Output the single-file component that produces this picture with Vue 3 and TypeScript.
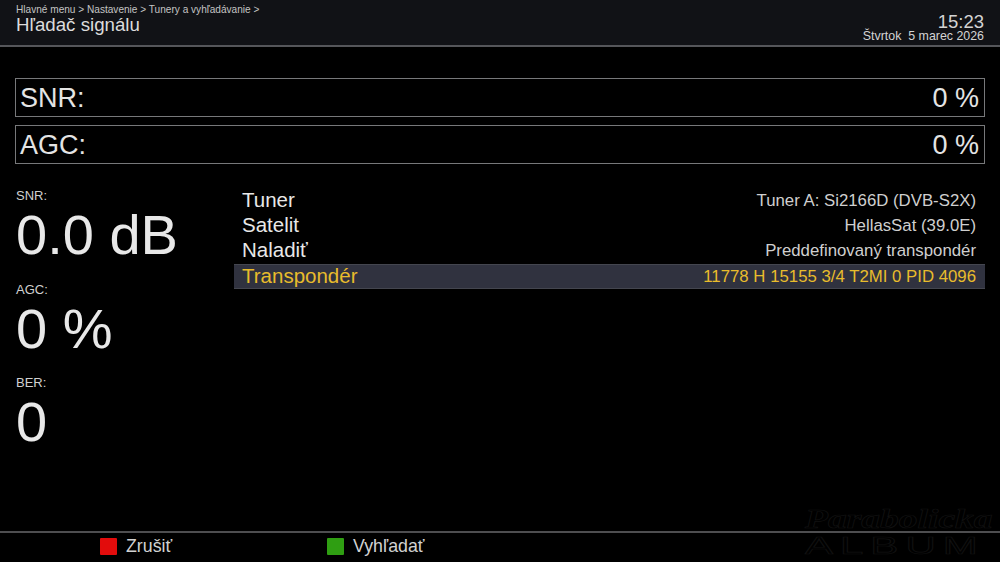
<script setup lang="ts">
interface Row { label: string; value: string; active?: boolean }

const bars = [
  { label: 'SNR:', value: '0 %' },
  { label: 'AGC:', value: '0 %' },
]
const stats = [
  { label: 'SNR:', value: '0.0 dB' },
  { label: 'AGC:', value: '0 %' },
  { label: 'BER:', value: '0' },
]
const rows: Row[] = [
  { label: 'Tuner', value: 'Tuner A: Si2166D (DVB-S2X)' },
  { label: 'Satelit', value: 'HellasSat (39.0E)' },
  { label: 'Naladiť', value: 'Preddefinovaný transpondér' },
  { label: 'Transpondér', value: '11778 H 15155 3/4 T2MI 0 PID 4096', active: true },
]
</script>

<template>
  <div class="screen">
    <header class="top">
      <div class="titles">
        <div class="crumbs">Hlavné menu &gt; Nastavenie &gt; Tunery a vyhľadávanie &gt;</div>
        <div class="title">Hľadač signálu</div>
      </div>
      <div class="clock">
        <div class="time">15:23</div>
        <div class="date">Štvrtok&nbsp; 5 marec 2026</div>
      </div>
    </header>

    <section class="bars">
      <div v-for="b in bars" :key="b.label" class="bar">
        <span>{{ b.label }}</span>
        <span>{{ b.value }}</span>
      </div>
    </section>

    <main class="body">
      <aside class="stats">
        <div v-for="s in stats" :key="s.label" class="stat">
          <div class="stat-label">{{ s.label }}</div>
          <div class="stat-value">{{ s.value }}</div>
        </div>
      </aside>
      <div class="list">
        <div v-for="r in rows" :key="r.label" class="row" :class="{ active: r.active }">
          <span class="row-label">{{ r.label }}</span>
          <span class="row-value">{{ r.value }}</span>
        </div>
      </div>
    </main>

    <footer class="foot">
      <div class="key key-red"><i></i>Zrušiť</div>
      <div class="key key-green"><i></i>Vyhľadať</div>
      <div class="mark">
        <div class="mark-top">Parabolicka</div>
        <div class="mark-bottom">ALBUM</div>
      </div>
    </footer>
  </div>
</template>

<style>
html, body { margin: 0; background: #000; }
</style>

<style scoped>
.screen {
  width: 1000px; height: 562px;
  display: flex; flex-direction: column;
  background: #000; color: #e6e6e6;
  font-family: "Liberation Sans", Arial, sans-serif;
  overflow: hidden;
}
.top {
  height: 47px; flex-shrink: 0;
  box-sizing: border-box;
  display: flex; justify-content: space-between;
  padding: 3px 16px 0 16px;
  background: #111216;
  border-bottom: 2px solid #55565a;
}
.crumbs { font-size: 10.1px; line-height: 12px; margin-top: 0.5px; color: #c4c4c4; }
.title { font-size: 18.7px; line-height: 18px; color: #dcdcdc; }
.clock { text-align: right; color: #d4d4d4; }
.time { font-size: 18.5px; line-height: 18px; margin-top: 10px; }
.date { font-size: 12.4px; line-height: 11px; }

.bars {
  display: flex; flex-direction: column; gap: 8px;
  margin: 31px 15px 0;
}
.bar {
  height: 39px; box-sizing: border-box;
  border: 1px solid #77787a;
  padding: 1px 5px 0 4px;
  display: flex; justify-content: space-between; align-items: center;
  font-size: 27px; color: #e4e4e4;
}

.body { flex: 1; display: flex; min-height: 0; }
.stats { width: 234px; flex-shrink: 0; padding: 24px 0 0 16px; box-sizing: border-box; }
.stat { height: 93.6px; }
.stat-label { font-size: 13px; line-height: 16px; color: #d0d0d0; }
.stat-value { font-size: 56px; line-height: 62px; color: #e8e8e8; }

.list { flex: 1; margin: 24px 15px 0 0; }
.row {
  height: 25.3px; display: flex; justify-content: space-between; align-items: center;
  padding: 0 9px 0 8px;
}
.row-label { font-size: 20.5px; line-height: 24px; margin-bottom: 2px; color: #e8e8e8; }
.row-value { font-size: 16.8px; color: #cfcfcf; }
.row.active { background: #30323f; box-sizing: border-box; border-top: 1px solid #44464f; border-bottom: 1px solid #44464f; }
.row.active .row-label, .row.active .row-value { color: #e8bc2c; }

.foot {
  height: 31px; flex-shrink: 0; box-sizing: border-box;
  border-top: 2px solid #4e4e50;
  position: relative;
  display: flex; align-items: center;
  padding-left: 100px;
  padding-bottom: 2px;
  font-size: 17.8px; color: #d2d2d2;
}
.key { display: flex; align-items: center; gap: 9px; }
.key i { width: 17px; height: 17px; display: block; border-radius: 1px; }
.key-red { width: 227px; }
.key-red i { background: #e20c0c; }
.key-green i { background: #2f9e12; }
.mark {
  position: absolute; right: 9px; bottom: 6px;
  width: 186px;
  color: #000; pointer-events: none;
  -webkit-text-stroke: 0.7px #111;
}
.mark-top, .mark-bottom { transform-origin: left center; white-space: nowrap; }
.mark-top { font-family: "Liberation Serif", serif; font-style: italic; font-weight: 700; font-size: 28px; line-height: 28px; transform: scaleX(1.34); }
.mark-bottom { font-size: 24px; line-height: 20px; letter-spacing: 4px; margin-top: 3px; transform: scaleX(1.75); }
</style>
